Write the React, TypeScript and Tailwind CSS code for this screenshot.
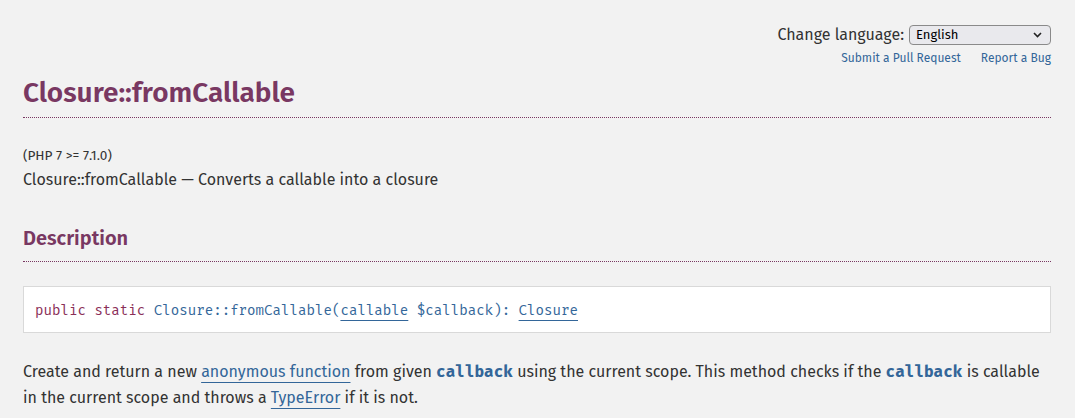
const sans = "font-['Fira_Sans','Open_Sans','Noto_Sans',sans-serif]";
const mono = "font-['Fira_Mono','DejaVu_Sans_Mono','Liberation_Mono',monospace]";

function LangBar() {
  return (
    <div className="flex flex-col items-end pt-[25px]">
      <div className="flex items-center gap-[5px] h-[20px]">
        <span className="text-[16px] text-[#333]">Change language:</span>
        <div className="flex h-[20px] w-[142px] items-center justify-between rounded-[4px] border border-[#8a8a8a] bg-[#e9e9ed] pl-[6px] pr-[8px] text-[13px] text-black">
          <span>English</span>
          <svg width="9" height="6" viewBox="0 0 9 6" fill="none" stroke="#222" strokeWidth="1.6">
            <path d="M1 1l3.5 3.5L8 1" />
          </svg>
        </div>
      </div>
      <div className="mt-[5px] flex gap-[20px] text-[12px] leading-[16px] text-[#369]">
        <a>Submit a Pull Request</a>
        <a>Report a Bug</a>
      </div>
    </div>
  );
}

function Link({ children }: { children: React.ReactNode }) {
  return (
    <a className="text-[#369] underline decoration-[#369] decoration-1 underline-offset-[5px]">
      {children}
    </a>
  );
}

export default function App() {
  return (
    <div className={`min-h-screen bg-[#f2f2f2] pl-[23px] pr-[24px] text-[#333] ${sans}`}>
      <LangBar />

      <h1 className="mt-[7px] border-b border-dotted border-[#793862] pb-[4px] text-[28px] font-semibold leading-[40px] text-[#793862]">
        Closure::fromCallable
      </h1>

      <div className="mt-[28px] text-[13.6px] leading-[20px]">(PHP 7 &gt;= 7.1.0)</div>
      <p className="mt-[3px] text-[16px] leading-[22px]">
        Closure::fromCallable — Converts a callable into a closure
      </p>

      <h2 className="mt-[32px] border-b border-dotted border-[#793862] pb-[8px] text-[20px] font-semibold leading-[30px] text-[#793862]">
        Description
      </h2>

      <div className={`mt-[24px] flex h-[47px] items-center border border-[#d9d9d9] bg-white px-[11px] pt-[3px] text-[14.15px] ${mono}`}>
        <div>
          <span className="text-[#8a2e57]">public static</span>{" "}
          <span className="text-[#369]">Closure::fromCallable</span>
          <span className="text-[#369]">(</span>
          <Link>callable</Link>{" "}
          <span className="text-[#369]">$callback</span>
          <span className="text-[#369]">): </span>
          <Link>Closure</Link>
        </div>
      </div>

      <p className="mt-[26px] text-[16px] leading-[26px]">
        Create and return a new <Link>anonymous function</Link> from given{" "}
        <code className={`font-bold text-[#369] text-[16px] ${mono}`}>callback</code> using the current scope. This
        method checks if the{" "}
        <code className={`font-bold text-[#369] text-[16px] ${mono}`}>callback</code> is callable in the current
        scope and throws a <Link>TypeError</Link> if it is not.
      </p>
    </div>
  );
}
